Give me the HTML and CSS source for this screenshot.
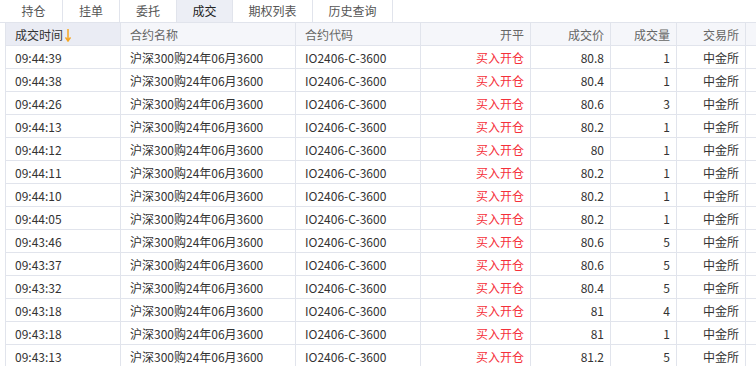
FILE: index.html
```html
<!DOCTYPE html>
<html lang="zh-CN">
<head>
  <meta charset="UTF-8">
  <title>成交</title>
  <link rel="stylesheet" href="styles.css">
</head>
<body>
  <div class="tabs">
    <div class="tab">持仓</div>
    <div class="tab">挂单</div>
    <div class="tab">委托</div>
    <div class="tab active">成交</div>
    <div class="tab wide">期权列表</div>
    <div class="tab wide">历史查询</div>
  </div>

  <table class="grid">
    <colgroup>
      <col class="c-time"><col class="c-name"><col class="c-code"><col class="c-oc">
      <col class="c-price"><col class="c-vol"><col class="c-ex"><col class="c-rest">
    </colgroup>
    <thead>
      <tr>
        <th class="sorted">成交时间<svg class="arrow" width="6" height="13" viewBox="0 0 6 13"><path d="M3 0V11.5M0.5 8.5L3 12L5.5 8.5" fill="none" stroke="#f5a623" stroke-width="1.5"/></svg></th>
        <th>合约名称</th>
        <th>合约代码</th>
        <th class="num">开平</th>
        <th class="num">成交价</th>
        <th class="num">成交量</th>
        <th class="num">交易所</th>
        <th></th>
      </tr>
    </thead>
    <tbody id="rows"></tbody>
  </table>

  <script>
    const trades = [
      ["09:44:39", "80.8", 1], ["09:44:38", "80.4", 1], ["09:44:26", "80.6", 3],
      ["09:44:13", "80.2", 1], ["09:44:12", "80", 1], ["09:44:11", "80.2", 1],
      ["09:44:10", "80.2", 1], ["09:44:05", "80.2", 1], ["09:43:46", "80.6", 5],
      ["09:43:37", "80.6", 5], ["09:43:32", "80.4", 5], ["09:43:18", "81", 4],
      ["09:43:18", "81", 1], ["09:43:13", "81.2", 5]
    ];

    const tbody = document.getElementById("rows");
    trades.forEach(([time, price, vol]) => {
      const tr = document.createElement("tr");
      tr.innerHTML = `
        <td>${time}</td>
        <td>沪深300购24年06月3600</td>
        <td>IO2406-C-3600</td>
        <td class="num buy">买入开仓</td>
        <td class="num">${price}</td>
        <td class="num">${vol}</td>
        <td class="num">中金所</td>
        <td></td>`;
      tbody.appendChild(tr);
    });
  </script>
</body>
</html>
```

FILE: styles.css
```css
body {
  margin: 0;
  padding: 0 0 0 5px;
  font-family: "Noto Sans CJK SC", "Microsoft YaHei", sans-serif;
  font-size: 12px;
  color: #333;
  background: #fff;
  overflow: hidden;
}

.tabs {
  display: flex;
  height: 22px;
  border-bottom: 1px solid #e1e4ec;
  margin-left: -5px;
  padding-left: 5px;
}

.tab {
  width: 57px;
  box-sizing: border-box;
  border-right: 1px solid #e1e4ec;
  line-height: 22px;
  text-align: center;
  color: #555;
}

.tab:first-child {
  width: 58px;
}

.tab.wide {
  width: 80px;
}

.tab.active {
  width: 56px;
  background: #eceef5;
  color: #222;
}

.grid {
  border-collapse: collapse;
  table-layout: fixed;
  width: 760px;
}

.c-time { width: 115px; }
.c-name { width: 175px; }
.c-code { width: 125px; }
.c-oc { width: 110px; }
.c-price { width: 80px; }
.c-vol { width: 66px; }
.c-ex { width: 69px; }
.c-rest { width: 20px; }

.grid th,
.grid td {
  height: 22px;
  padding: 0 6px 0 9px;
  border: 1px solid #e1e4ec;
  border-top: none;
  text-align: left;
  white-space: nowrap;
  overflow: hidden;
  font-weight: normal;
}

.grid th {
  background: #f5f6fa;
  color: #666;
}

.grid th.sorted {
  background: #eaecf4;
  color: #333;
}

.arrow {
  margin-left: 2px;
  vertical-align: -2px;
}

.grid .num {
  text-align: right;
}

.grid .buy {
  color: #f5303a;
}
```
